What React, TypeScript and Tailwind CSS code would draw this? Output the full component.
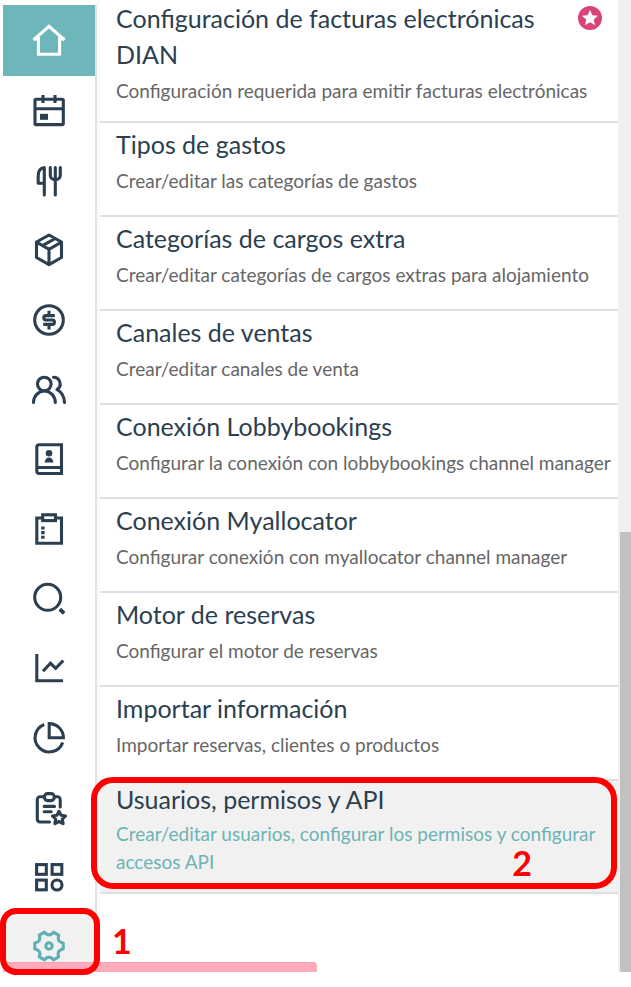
import type { ReactNode } from "react";
import clsx from "clsx";

interface NavItem {
  label: string;
  icon: ReactNode;
}

interface Setting {
  title: string;
  description: string;
  featured?: boolean;
}

const navItems: NavItem[] = [
  {
    label: "Calendario",
    icon: (
      <>
        <rect x="4" y="6.3" width="28.3" height="25.3" rx="1" />
        <path d="M12 2v8M24 2v8M4 15.7h28" />
        <rect x="9" y="20.8" width="8" height="6" fill="currentColor" stroke="none" />
      </>
    ),
  },
  {
    label: "Restaurante",
    icon: (
      <path
        strokeLinecap="round"
        strokeLinejoin="round"
        d="M13.3 32V4.5C9 5 7.2 8.5 7.2 13v7.3h6.1M19.3 4.5v7.5c0 2.8 2 4.8 5 4.8s5-2 5-4.8V4.5M24.3 4.5V32"
      />
    ),
  },
  {
    label: "Productos",
    icon: (
      <path
        strokeLinejoin="round"
        d="M18 3l12.5 7v15.5L18 32.7 5.5 25.5V10zM5.5 10L18 17.3 30.5 10M18 17.3v15.4M11.5 13.7L24.2 6.5"
      />
    ),
  },
  {
    label: "Caja",
    icon: (
      <>
        <circle cx="18" cy="18" r="14.3" />
        <path d="M23.8 13.6h-9q-2 0-2 2.2t2 2.2h6.6q2 0 2 2.2t-2 2.2h-9.2M18 8.8v5M18 22.5v5" />
      </>
    ),
  },
  {
    label: "Clientes",
    icon: (
      <>
        <circle cx="13.3" cy="12" r="6.8" />
        <path
          strokeLinecap="round"
          d="M2.5 30.5a10.9 11.5 0 0 1 21.8 0M22.5 5.3a6.6 6.6 0 0 1 3.5 12.2M26 17.5c4.5 2.5 7.2 7 7.5 13"
        />
      </>
    ),
  },
  {
    label: "Contactos",
    icon: (
      <>
        <path d="M8.3 3.8h22.2v28.7H8.3a2.5 2.5 0 0 1-2.5-2.5V6.3a2.5 2.5 0 0 1 2.5-2.5zM5.8 26.5h24.7" />
        <circle cx="18" cy="12.2" r="3.3" fill="currentColor" stroke="none" />
        <path d="M13.5 21.4c.6-3.2 2.2-4.9 4.5-4.9s3.9 1.7 4.5 4.9z" fill="currentColor" stroke="none" />
      </>
    ),
  },
  {
    label: "Tareas",
    icon: (
      <>
        <path d="M11.5 7H5.8v25.3h24.7V7h-5.7" />
        <rect x="11.7" y="3.8" width="12.8" height="5.8" />
        <path d="M10.2 17h3.4M10.2 21.6h3.4M10.2 26.3h3.4" />
      </>
    ),
  },
  {
    label: "Buscar",
    icon: (
      <>
        <circle cx="16.7" cy="16.3" r="13" />
        <path strokeWidth="3.8" d="M28.8 28.2l4.3 4.2" />
      </>
    ),
  },
  {
    label: "Informes",
    icon: <path d="M5.8 4v26.7H32M12 21.3l7.5-8 5.2 5L32.3 10.5" />,
  },
  {
    label: "Estadísticas",
    icon: <path d="M13.2 4.5A14.2 14.2 0 1 0 31.7 22.5M18.2 3.6a14.2 14.2 0 0 1 14.2 14.2H18.2z" />,
  },
  {
    label: "Evaluaciones",
    icon: (
      <g strokeLinecap="round" strokeLinejoin="round">
        <path d="M13 6.8H9a2.7 2.7 0 0 0-2.7 2.7v19.8A2.7 2.7 0 0 0 9 32h9.5M23.5 6.8h3a2.7 2.7 0 0 1 2.7 2.7V17" />
        <rect x="13.5" y="3.6" width="9.7" height="7" rx="3" />
        <path d="M13.2 16.4h10.3M13.2 21.7h7" />
        <path d="M28 21.3l2 4 4.5.7-3.2 3.1.8 4.5-4.1-2.1-4.1 2.1.8-4.5-3.2-3.1 4.5-.7z" />
      </g>
    ),
  },
  {
    label: "Aplicaciones",
    icon: (
      <>
        <rect x="5.6" y="5.6" width="9.7" height="9.7" />
        <rect x="21.1" y="5.6" width="9.7" height="9.7" />
        <rect x="5.6" y="21.1" width="9.7" height="9.7" />
        <circle cx="26" cy="26" r="5" />
      </>
    ),
  },
];

const settings: Setting[] = [
  {
    title: "Configuración de facturas electrónicas DIAN",
    description: "Configuración requerida para emitir facturas electrónicas",
    featured: true,
  },
  { title: "Tipos de gastos", description: "Crear/editar las categorías de gastos" },
  {
    title: "Categorías de cargos extra",
    description: "Crear/editar categorías de cargos extras para alojamiento",
  },
  { title: "Canales de ventas", description: "Crear/editar canales de venta" },
  {
    title: "Conexión Lobbybookings",
    description: "Configurar la conexión con lobbybookings channel manager",
  },
  {
    title: "Conexión Myallocator",
    description: "Configurar conexión con myallocator channel manager",
  },
  { title: "Motor de reservas", description: "Configurar el motor de reservas" },
  { title: "Importar información", description: "Importar reservas, clientes o productos" },
];

function NavIcon({ children }: { children: ReactNode }) {
  return (
    <svg
      viewBox="0 0 36 36"
      className="size-9 shrink-0"
      fill="none"
      stroke="currentColor"
      strokeWidth="3.1"
      aria-hidden="true"
    >
      {children}
    </svg>
  );
}

function StarBadge() {
  return (
    <svg viewBox="0 0 24 24" className="mt-1.5 mr-3 size-6 shrink-0" aria-hidden="true">
      <circle cx="12" cy="12" r="12" fill="#d8447a" />
      <path
        fill="#fff"
        d="M12 4l2.3 5.3 5.7.5-4.3 3.8 1.3 5.6-5-3-5 3 1.3-5.6L4 9.8l5.7-.5z"
      />
    </svg>
  );
}

function Sidebar() {
  return (
    <nav className="flex w-[100px] shrink-0 flex-col border-r-[3px] border-[#f8fafa] pt-[5px] pl-[3px] text-[#2b3f50]">
      <a
        href="#inicio"
        aria-label="Inicio"
        className="flex h-[71px] items-center justify-center border-r-2 border-[#e1e4e4] bg-[#6db7bb] text-white"
      >
        <NavIcon>
          <path d="M2.5 15.9h4.9v15.3h21.2V15.9h4.9M2.5 17L18 3.3 33.5 17" />
        </NavIcon>
      </a>
      {navItems.map((item) => (
        <a
          key={item.label}
          href={`#${item.label.toLowerCase()}`}
          aria-label={item.label}
          className="flex flex-1 items-center justify-center border-r-2 border-[#e1e4e4]"
        >
          <NavIcon>{item.icon}</NavIcon>
        </a>
      ))}
      <a
        href="#configuracion"
        aria-label="Configuración"
        className="relative flex h-[60px] justify-center border-r-2 border-[#e1e4e4] bg-[#f1f1f1] pt-4 text-[#5fafb4]"
      >
        <NavIcon>
          <circle cx="18" cy="18" r="3.2" />
          <path
            strokeLinejoin="round"
            d="M32.2 15v6Q25.4 22.3 27.7 28.8L22.5 31.8Q18 26.5 13.5 31.8L8.3 28.8Q10.6 22.3 3.8 21V15Q10.6 13.7 8.3 7.2L13.5 4.2Q18 9.5 22.5 4.2L27.7 7.2Q25.4 13.7 32.2 15z"
          />
        </NavIcon>
        <span className="absolute bottom-0 left-0 h-2.5 w-[314px] rounded-tr border-t border-[#f0a3b0] bg-[#ffabbb]" />
        <span className="absolute -top-1 -right-[5px] -bottom-[3px] -left-[3px] rounded-2xl border-6 border-[#ff0000]" />
        <strong className="absolute top-3 left-[109px] text-[34px] leading-none font-bold text-[#ff0000]">1</strong>
      </a>
    </nav>
  );
}

function SettingRow({ title, description, featured }: Setting) {
  return (
    <a
      href="#"
      className={clsx(
        "block border-b-2 border-[#dfdfdf] pr-1 pl-4",
        featured ? "pb-4" : "pt-[3px] pb-5"
      )}
    >
      <div className="flex justify-between">
        <h2 className="text-[25px] leading-9 text-[#2b3f50]">{title}</h2>
        {featured && <StarBadge />}
      </div>
      <p className="mt-[5px] text-[19px] leading-7 text-[#666]">{description}</p>
    </a>
  );
}

export default function App() {
  return (
    <div className="flex min-h-screen bg-white pb-[15px] font-[Lato,sans-serif]">
      <Sidebar />
      <main className="min-w-0 flex-1">
        {settings.map((setting) => (
          <SettingRow key={setting.title} {...setting} />
        ))}
        <a
          href="#usuarios"
          className="relative block border-b-2 border-[#dfdfdf] bg-[#f1f1f1] pr-1 pb-4 pl-4"
        >
          <h2 className="text-[25px] leading-9 text-[#2b3f50]">Usuarios, permisos y API</h2>
          <p className="mt-[3px] text-[19px] leading-7 text-[#6cb3b6]">
            Crear/editar usuarios, configurar los permisos y configurar accesos API
          </p>
          <span className="absolute -top-1 right-px bottom-[3px] -left-[9px] rounded-[22px] border-6 border-[#ff0000]" />
          <strong className="absolute right-[86px] bottom-3 text-[34px] leading-none font-bold text-[#ff0000]">
            2
          </strong>
        </a>
      </main>
      <div className="flex w-[13px] shrink-0 flex-col items-end justify-end bg-[#f0f0f0]">
        <div className="h-[440px] w-[11px] bg-[#c1c1c1]" />
      </div>
    </div>
  );
}
